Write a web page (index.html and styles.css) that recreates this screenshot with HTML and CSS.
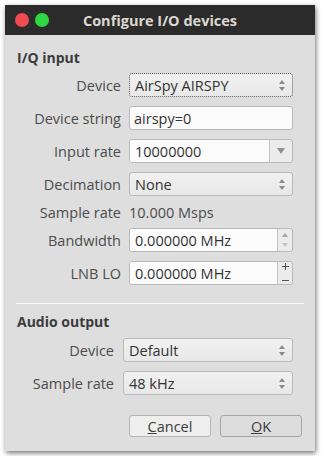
FILE: index.html
```html
<!DOCTYPE html>
<html lang="en">
<head>
  <meta charset="UTF-8">
  <title>Configure I/O devices</title>
  <link rel="stylesheet" href="styles.css">
</head>
<body>
  <div class="window">
    <div class="titlebar">
      <div class="controls">
        <span class="dot red"></span>
        <span class="dot green"></span>
      </div>
      <div class="title">Configure I/O devices</div>
      <div></div>
    </div>

    <div class="content">
      <section class="group iq">
        <h2>I/Q input</h2>
        <div class="form">
          <label>Device</label>
          <div class="combo focus"><span>AirSpy AIRSPY</span><span class="updown"><i class="up"></i><i class="down"></i></span></div>

          <label>Device string</label>
          <div class="edit">airspy=0</div>

          <label>Input rate</label>
          <div class="edit-combo"><span class="text">10000000</span><span class="drop"><i class="down big"></i></span></div>

          <label>Decimation</label>
          <div class="combo"><span>None</span><span class="updown"><i class="up"></i><i class="down"></i></span></div>

          <label>Sample rate</label>
          <div class="value">10.000 Msps</div>

          <label>Bandwidth</label>
          <div class="spin"><span class="text">0.000000 MHz</span><span class="btns"><i class="up dim"></i><i class="down faint"></i></span></div>

          <label>LNB LO</label>
          <div class="spin"><span class="text">0.000000 MHz</span><span class="btns pm"><i class="plus"></i><i class="minus"></i></span></div>
        </div>
      </section>

      <hr>

      <section class="group audio">
        <h2>Audio output</h2>
        <div class="form">
          <label>Device</label>
          <div class="combo"><span>Default</span><span class="updown"><i class="up"></i><i class="down"></i></span></div>

          <label>Sample rate</label>
          <div class="combo"><span>48 kHz</span><span class="updown"><i class="up"></i><i class="down"></i></span></div>
        </div>
      </section>

      <div class="buttons">
        <button class="btn"><u>C</u>ancel</button>
        <button class="btn default"><u>O</u>K</button>
      </div>
    </div>
  </div>
</body>
</html>
```

FILE: styles.css
```css
body {
  margin: 0;
  background: #ffffff;
  font-family: 'Open Sans', 'Noto Sans', sans-serif;
}

.window {
  margin: 5px;
  width: 310px;
  height: 446px;
  background: #dedede;
  box-shadow: 1px 2px 5px rgba(0,0,0,0.55);
  display: flex;
  flex-direction: column;
}

.titlebar {
  height: 30px;
  background: #2b2b2b;
  display: grid;
  grid-template-columns: 1fr auto 1fr;
  align-items: center;
}

.controls {
  display: flex;
  gap: 6px;
  padding-left: 10px;
}

.dot {
  width: 14px;
  height: 14px;
  border-radius: 50%;
}

.dot.red { background: #f04b51; }
.dot.green { background: #2fd843; }

.title {
  color: #dcd8d0;
  font-weight: 700;
  font-size: 14.5px;
}

.content {
  padding: 14px 13px 0 12px;
  color: #4a4a4a;
  font-size: 14.5px;
}

h2 {
  margin: 0;
  font-size: 14px;
  line-height: 18px;
  font-weight: 700;
  color: #3c3c3c;
}

.form {
  display: grid;
  column-gap: 8px;
  row-gap: 9px;
  grid-auto-rows: 24px;
  align-items: center;
  margin-right: 9px;
}

.iq .form {
  margin-top: 6px;
  grid-template-columns: 104px 1fr;
  grid-template-rows: 24px 24px 24px 24px 14px 24px 24px;
}

.audio h2 { margin-top: 9px; }

.audio .form {
  margin-top: 7px;
  grid-template-columns: 97px 1fr;
  column-gap: 9px;
}

label {
  text-align: right;
  color: #4c4c4c;
  white-space: nowrap;
}

.value {
  color: #4c4c4c;
}

.combo, .edit, .edit-combo, .spin {
  box-sizing: border-box;
  height: 24px;
  border: 1px solid #b9b9b9;
  border-radius: 3px;
  color: #333;
  display: flex;
  align-items: center;
}

.combo {
  background: linear-gradient(#f1f1f1, #e8e8e8);
  padding: 0 7px 0 5px;
  justify-content: space-between;
}

.combo.focus {
  border: 1px dotted #555;
}

.edit {
  background: #fbfbfb;
  padding-left: 4px;
}

.edit-combo, .spin {
  background: #ececec;
}

.edit-combo .text, .spin .text {
  flex: 1;
  align-self: stretch;
  display: flex;
  align-items: center;
  background: #fbfbfb;
  padding-left: 5px;
  border-radius: 2px 0 0 2px;
  border-right: 1px solid #c4c4c4;
}

.edit-combo .drop {
  width: 22px;
  display: flex;
  justify-content: center;
}

.spin .btns {
  width: 14px;
  display: flex;
  flex-direction: column;
  align-items: center;
  gap: 6px;
}

.spin .btns.pm {
  gap: 7px;
}

i.plus, i.minus {
  display: block;
  position: relative;
  width: 7px;
  height: 7px;
}

i.plus::before, i.plus::after, i.minus::before {
  content: "";
  position: absolute;
  background: #555;
}

i.plus::before, i.minus::before {
  left: 0;
  top: 3px;
  width: 7px;
  height: 1px;
}

i.plus::after {
  left: 3px;
  top: 0;
  width: 1px;
  height: 7px;
}

.updown {
  display: flex;
  flex-direction: column;
  gap: 3px;
}

i.up, i.down {
  display: block;
  width: 0;
  height: 0;
  border-left: 3px solid transparent;
  border-right: 3px solid transparent;
}

i.up { border-bottom: 4px solid #8a8a8a; }
i.down { border-top: 4px solid #8a8a8a; }

i.down.big {
  border-left-width: 4px;
  border-right-width: 4px;
  border-top-width: 6px;
  border-top-color: #909090;
}

i.up.dim { border-bottom-color: #a6a6a6; }
i.down.faint { border-top-color: #c4c4c4; }

hr {
  margin: 18px 0 0 -1px;
  border: none;
  border-top: 1px solid #f6f6f6;
  width: 288px;
}

.buttons {
  display: flex;
  justify-content: flex-end;
  gap: 9px;
  margin-top: 20px;
}

.btn {
  width: 82px;
  height: 22px;
  border: 1px solid #b4b4b4;
  border-radius: 3px;
  background: #eeeeee;
  font-family: inherit;
  font-size: 14.5px;
  color: #3c3c3c;
  padding: 0;
}

.btn.default {
  background: #dcdcdc;
  border-color: #a6a6a6;
}
```
